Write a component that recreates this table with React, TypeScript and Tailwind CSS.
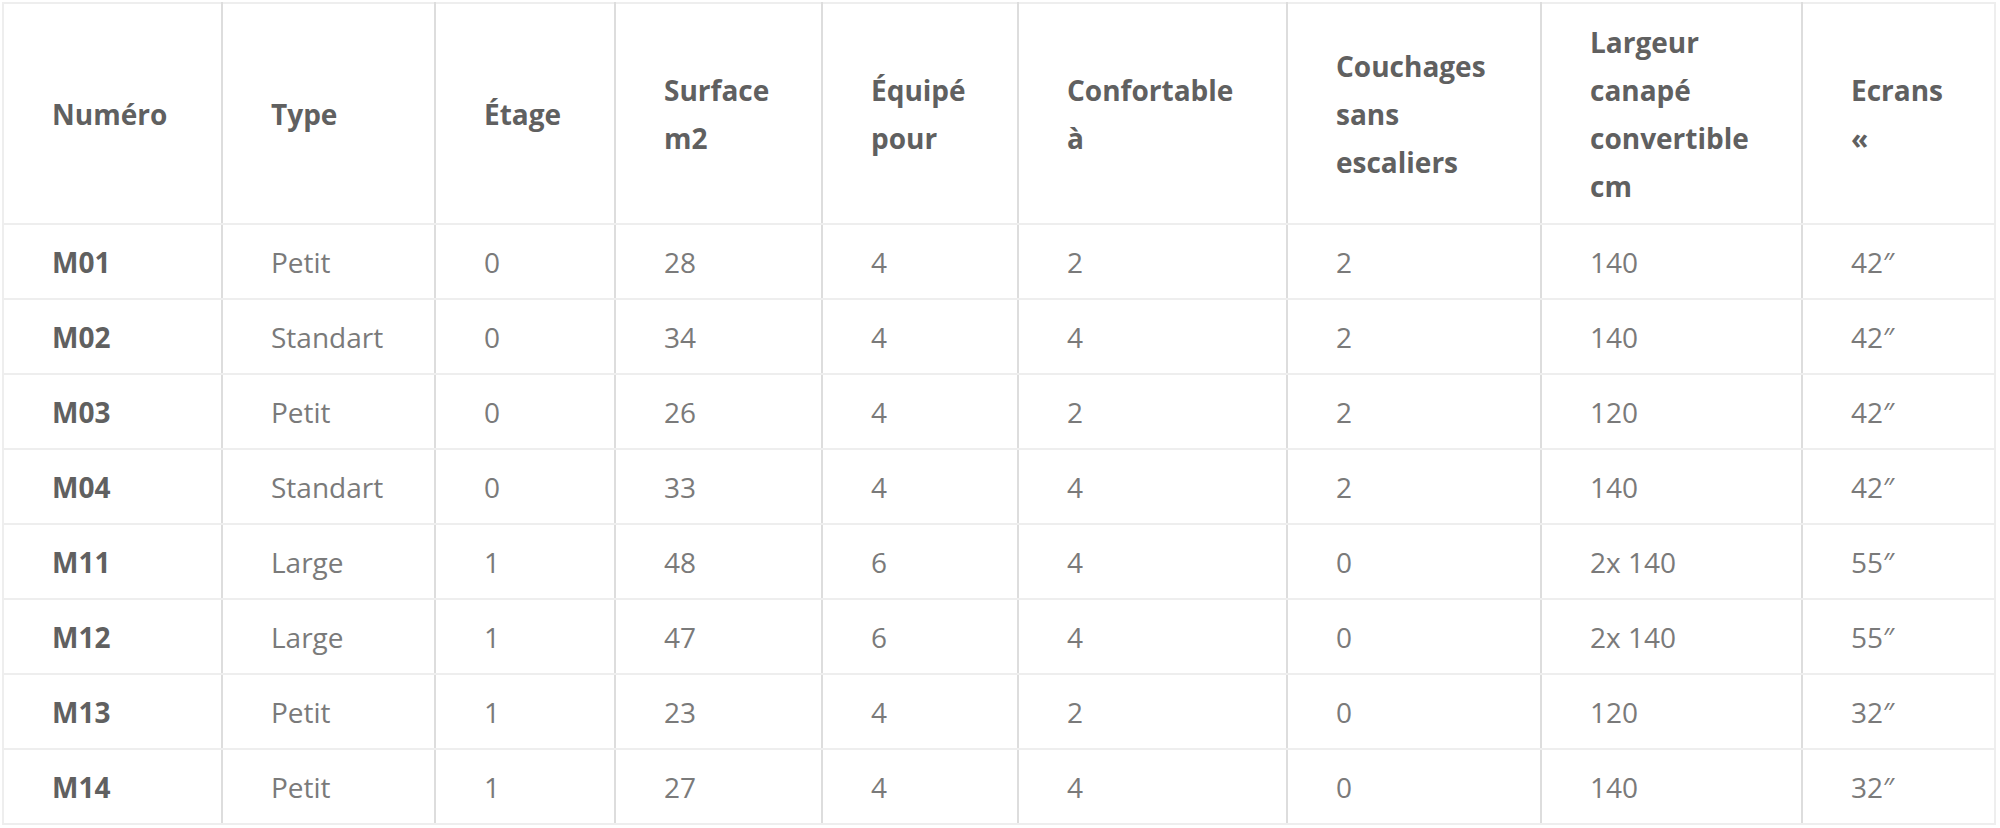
import React from "react";

type Row = string[];

const headers: string[][] = [
  ["Numéro"],
  ["Type"],
  ["Étage"],
  ["Surface", "m2"],
  ["Équipé", "pour"],
  ["Confortable", "à"],
  ["Couchages", "sans", "escaliers"],
  ["Largeur", "canapé", "convertible", "cm"],
  ["Ecrans", "«"],
];

const rows: Row[] = [
  ["M01", "Petit", "0", "28", "4", "2", "2", "140", "42″"],
  ["M02", "Standart", "0", "34", "4", "4", "2", "140", "42″"],
  ["M03", "Petit", "0", "26", "4", "2", "2", "120", "42″"],
  ["M04", "Standart", "0", "33", "4", "4", "2", "140", "42″"],
  ["M11", "Large", "1", "48", "6", "4", "0", "2x 140", "55″"],
  ["M12", "Large", "1", "47", "6", "4", "0", "2x 140", "55″"],
  ["M13", "Petit", "1", "23", "4", "2", "0", "120", "32″"],
  ["M14", "Petit", "1", "27", "4", "4", "0", "140", "32″"],
];

// column widths measured from the reference grid lines
const widths = ["w-[219px]", "w-[213px]", "w-[180px]", "w-[207px]", "w-[196px]", "w-[269px]", "w-[254px]", "w-[261px]", "w-[193px]"];

const App: React.FC = () => {
  return (
    <div className="min-h-[828px] bg-white pl-[2px] pt-[2px] font-['Open_Sans',sans-serif]">
      <table className="w-[1994px] table-fixed border-collapse border-2 border-[#eeeeee]">
        <colgroup>
          {widths.map((w, i) => (
            <col key={i} className={w} />
          ))}
        </colgroup>
        <thead>
          <tr className="h-[221px]">
            {headers.map((lines, i) => (
              <th
                key={i}
                className="border-x-2 border-b-2 border-x-[#dddddd] border-b-[#eeeeee] pl-[48px] pr-2 text-left align-middle text-[28px] font-bold leading-[48px] text-[#606060] first:border-l-[#eeeeee] last:border-r-[#eeeeee]"
              >
                {lines.map((l, j) => (
                  <div key={j}>{l}</div>
                ))}
              </th>
            ))}
          </tr>
        </thead>
        <tbody>
          {rows.map((row, r) => (
            <tr key={r} className="h-[75px]">
              {row.map((cell, c) => (
                <td
                  key={c}
                  className={
                    c === 0
                      ? "border-2 border-[#eeeeee] border-r-[#dddddd] pl-[48px] text-[28px] font-bold leading-[48px] text-[#606060]"
                      : "border-2 border-[#eeeeee] border-x-[#dddddd] pl-[48px] text-[28px] font-normal leading-[48px] text-[#7a7a7a] last:border-r-[#eeeeee]"
                  }
                >
                  {cell}
                </td>
              ))}
            </tr>
          ))}
        </tbody>
      </table>
    </div>
  );
};

export default App;
